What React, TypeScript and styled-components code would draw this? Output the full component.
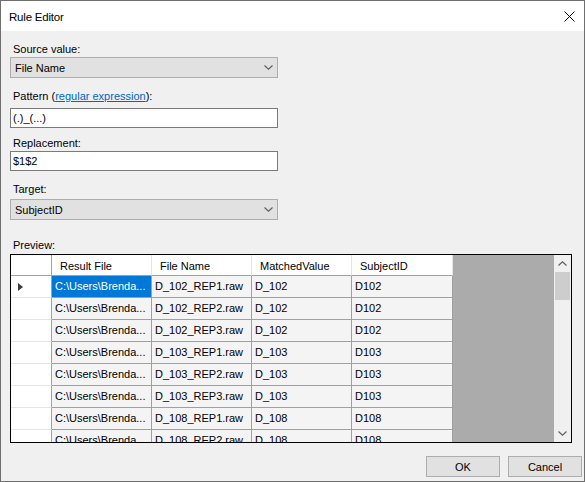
import styled, { createGlobalStyle } from 'styled-components';

interface PreviewRow {
  resultFile: string;
  fileName: string;
  matched: string;
  subjectId: string;
}

const rows: PreviewRow[] = [
  { resultFile: 'C:\\Users\\Brenda...', fileName: 'D_102_REP1.raw', matched: 'D_102', subjectId: 'D102' },
  { resultFile: 'C:\\Users\\Brenda...', fileName: 'D_102_REP2.raw', matched: 'D_102', subjectId: 'D102' },
  { resultFile: 'C:\\Users\\Brenda...', fileName: 'D_102_REP3.raw', matched: 'D_102', subjectId: 'D102' },
  { resultFile: 'C:\\Users\\Brenda...', fileName: 'D_103_REP1.raw', matched: 'D_103', subjectId: 'D103' },
  { resultFile: 'C:\\Users\\Brenda...', fileName: 'D_103_REP2.raw', matched: 'D_103', subjectId: 'D103' },
  { resultFile: 'C:\\Users\\Brenda...', fileName: 'D_103_REP3.raw', matched: 'D_103', subjectId: 'D103' },
  { resultFile: 'C:\\Users\\Brenda...', fileName: 'D_108_REP1.raw', matched: 'D_108', subjectId: 'D108' },
  { resultFile: 'C:\\Users\\Brenda...', fileName: 'D_108_REP2.raw', matched: 'D_108', subjectId: 'D108' },
];

const columns = [
  { title: 'Result File', width: 100 },
  { title: 'File Name', width: 100 },
  { title: 'MatchedValue', width: 100 },
  { title: 'SubjectID', width: 101 },
];

const Chevron = ({ up }: { up?: boolean }) => (
  <svg width='9' height='5' viewBox='0 0 9 5'>
    <path d={up ? 'M0.5 4.5 L4.5 0.8 L8.5 4.5' : 'M0.5 0.5 L4.5 4.2 L8.5 0.5'} fill='none' stroke='#606060' strokeWidth='1.2' />
  </svg>
);

export default function App() {
  return (
    <>
      <GlobalStyle />
      <Window>
        {/* Title bar */}
        <TitleBar>
          <Title>Rule Editor</Title>
          <svg width='11' height='11' viewBox='0 0 11 11'>
            <path d='M0.5 0.5 L10.5 10.5 M10.5 0.5 L0.5 10.5' stroke='#000' strokeWidth='1' />
          </svg>
        </TitleBar>

        <Body>
          {/* Form fields */}
          <Label $top={12}>Source value:</Label>
          <Combo $top={1}>
            <span>File Name</span>
            <Chevron />
          </Combo>

          <Label $top={12}>
            Pattern (<Link>regular expression</Link>):
          </Label>
          <TextBox $top={5}>(.)_(...)</TextBox>

          <Label $top={9}>Replacement:</Label>
          <TextBox $top={1}>$1$2</TextBox>

          <Label $top={12}>Target:</Label>
          <Combo $top={3}>
            <span>SubjectID</span>
            <Chevron />
          </Combo>

          <Label $top={19}>Preview:</Label>

          {/* Preview grid */}
          <GridFrame>
            <GridArea>
              <HeaderRow>
                <RowHeaderCell $header />
                {columns.map((col) => (
                  <HeaderCell key={col.title} $width={col.width}>
                    {col.title}
                  </HeaderCell>
                ))}
              </HeaderRow>
              {rows.map((row, index) => (
                <DataRow key={row.fileName}>
                  <RowHeaderCell>{index === 0 && <CurrentMark />}</RowHeaderCell>
                  <Cell $width={100} $selected={index === 0}>
                    {row.resultFile}
                  </Cell>
                  <Cell $width={100}>{row.fileName}</Cell>
                  <Cell $width={100}>{row.matched}</Cell>
                  <Cell $width={101}>{row.subjectId}</Cell>
                </DataRow>
              ))}
            </GridArea>
            <ScrollBar>
              <ScrollButton>
                <Chevron up />
              </ScrollButton>
              <Thumb />
              <ScrollTrack />
              <ScrollButton>
                <Chevron />
              </ScrollButton>
            </ScrollBar>
          </GridFrame>

          {/* Footer */}
          <Footer>
            <Button>OK</Button>
            <Button>Cancel</Button>
          </Footer>
        </Body>
      </Window>
    </>
  );
}

const GlobalStyle = createGlobalStyle`
  html, body {
    margin: 0;
    padding: 0;
    background: #ffffff;
  }
  * {
    box-sizing: border-box;
  }
`;

const Window = styled.div`
  width: 585px;
  height: 482px;
  border: 1px solid #6f6f6f;
  display: flex;
  flex-direction: column;
  font-family: 'Liberation Sans', Arial, sans-serif;
  font-size: 11px;
  color: #000;
`;

// ------------------------------- Title bar ------------------------------- //
const TitleBar = styled.div`
  height: 30px;
  background: #ffffff;
  display: flex;
  align-items: center;
  justify-content: space-between;
  padding: 1px 9px 0 8px;
`;

const Title = styled.span`
  font-size: 11.5px;
  letter-spacing: -0.2px;
`;

// ------------------------------- Form ------------------------------- //
const Body = styled.div`
  flex: 1;
  background: #f0f0f0;
  display: flex;
  flex-direction: column;
  padding: 0 2px 0 9px;
`;

const Label = styled.div<{ $top: number }>`
  margin-top: ${({ $top }) => $top}px;
  margin-left: 3px;
  height: 13px;
  line-height: 13px;
`;

const Link = styled.span`
  color: #0066cc;
  text-decoration: underline;
`;

const Combo = styled.div<{ $top: number }>`
  margin-top: ${({ $top }) => $top}px;
  width: 268px;
  height: 21px;
  background: #e1e1e1;
  border: 1px solid #adadad;
  display: flex;
  align-items: center;
  justify-content: space-between;
  padding: 0 4px 0 4px;
`;

const TextBox = styled.div<{ $top: number }>`
  margin-top: ${({ $top }) => $top}px;
  width: 268px;
  height: 20px;
  background: #ffffff;
  border: 1px solid #7a7a7a;
  line-height: 18px;
  padding-left: 2px;
`;

// ------------------------------- Grid ------------------------------- //
const GridFrame = styled.div`
  margin-top: 2px;
  width: 562px;
  height: 189px;
  border: 1px solid #000;
  display: flex;
`;

const GridArea = styled.div`
  flex: 1;
  background: #ababab;
  overflow: hidden;
`;

const HeaderRow = styled.div`
  display: flex;
  height: 21px;
`;

const DataRow = styled.div`
  display: flex;
  height: 22px;
`;

const RowHeaderCell = styled.div<{ $header?: boolean }>`
  width: 41px;
  background: #ffffff;
  border-right: 1px solid #a0a0a0;
  border-bottom: 1px solid ${({ $header }) => ($header ? '#a0a0a0' : '#e4e4e4')};
  display: flex;
  align-items: center;
  padding-left: 7px;
`;

const CurrentMark = styled.div`
  width: 0;
  height: 0;
  border-top: 4.5px solid transparent;
  border-bottom: 4.5px solid transparent;
  border-left: 5px solid #3c3c3c;
`;

const HeaderCell = styled.div<{ $width: number }>`
  width: ${({ $width }) => $width}px;
  background: #ffffff;
  border-right: 1px solid #e4e4e4;
  border-bottom: 1px solid #a0a0a0;
  line-height: 20px;
  padding: 1px 0 0 8px;
  white-space: nowrap;
`;

const Cell = styled.div<{ $width: number; $selected?: boolean }>`
  width: ${({ $width }) => $width}px;
  background: ${({ $selected }) => ($selected ? '#0078d7' : '#f4f4f4')};
  color: ${({ $selected }) => ($selected ? '#ffffff' : '#000')};
  border-right: 1px solid #a0a0a0;
  border-bottom: 1px solid #a0a0a0;
  line-height: 21px;
  padding-left: 3px;
  white-space: nowrap;
  overflow: hidden;
`;

const ScrollBar = styled.div`
  width: 17px;
  background: #f0f0f0;
  display: flex;
  flex-direction: column;
`;

const ScrollButton = styled.div`
  height: 17px;
  display: flex;
  align-items: center;
  justify-content: center;
`;

const Thumb = styled.div`
  height: 28px;
  margin: 0 1px;
  background: #cdcdcd;
`;

const ScrollTrack = styled.div`
  flex: 1;
`;

// ------------------------------- Footer ------------------------------- //
const Footer = styled.div`
  margin-top: 13px;
  display: flex;
  justify-content: flex-end;
  gap: 8px;
`;

const Button = styled.div`
  width: 74px;
  height: 21px;
  background: #e1e1e1;
  border: 1px solid #adadad;
  display: flex;
  align-items: center;
  justify-content: center;
`;
